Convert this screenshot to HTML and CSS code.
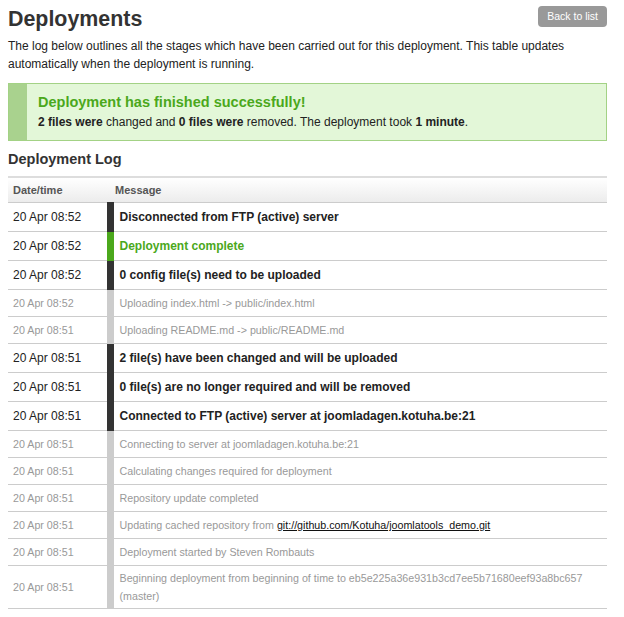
FILE: index.html
```html
<!DOCTYPE html>
<html>
<head>
<meta charset="utf-8">
<link rel="stylesheet" href="styles.css">
</head>
<body>
<div class="page">
  <div class="page-head">
    <h1 class="title">Deployments</h1>
    <a class="btn" href="#">Back to list</a>
  </div>
  <p class="intro">The log below outlines all the stages which have been carried out for this deployment. This table updates automatically when the deployment is running.</p>

  <div class="success">
    <div class="success-stripe"></div>
    <div class="success-body">
      <h2 class="success-title">Deployment has finished successfully!</h2>
      <p class="success-text"><b>2 files were</b> changed and <b>0 files were</b> removed. The deployment took <b>1 minute</b>.</p>
    </div>
  </div>

  <h3 class="log-title">Deployment Log</h3>
  <table class="log">
    <thead>
      <tr><th class="c-date">Date/time</th><th class="c-msg">Message</th></tr>
    </thead>
    <tbody>
      <tr class="strong"><td class="c-date">20 Apr 08:52</td><td class="c-msg dark">Disconnected from FTP (active) server</td></tr>
      <tr class="strong ok"><td class="c-date">20 Apr 08:52</td><td class="c-msg green">Deployment complete</td></tr>
      <tr class="strong"><td class="c-date">20 Apr 08:52</td><td class="c-msg dark">0 config file(s) need to be uploaded</td></tr>
      <tr class="light"><td class="c-date">20 Apr 08:52</td><td class="c-msg grey">Uploading index.html -&gt; public/index.html</td></tr>
      <tr class="light"><td class="c-date">20 Apr 08:51</td><td class="c-msg grey">Uploading README.md -&gt; public/README.md</td></tr>
      <tr class="strong"><td class="c-date">20 Apr 08:51</td><td class="c-msg dark">2 file(s) have been changed and will be uploaded</td></tr>
      <tr class="strong"><td class="c-date">20 Apr 08:51</td><td class="c-msg dark">0 file(s) are no longer required and will be removed</td></tr>
      <tr class="strong"><td class="c-date">20 Apr 08:51</td><td class="c-msg dark">Connected to FTP (active) server at joomladagen.kotuha.be:21</td></tr>
      <tr class="light"><td class="c-date">20 Apr 08:51</td><td class="c-msg grey">Connecting to server at joomladagen.kotuha.be:21</td></tr>
      <tr class="light"><td class="c-date">20 Apr 08:51</td><td class="c-msg grey">Calculating changes required for deployment</td></tr>
      <tr class="light"><td class="c-date">20 Apr 08:51</td><td class="c-msg grey">Repository update completed</td></tr>
      <tr class="light"><td class="c-date">20 Apr 08:51</td><td class="c-msg grey">Updating cached repository from <a href="#">git://github.com/Kotuha/joomlatools_demo.git</a></td></tr>
      <tr class="light"><td class="c-date">20 Apr 08:51</td><td class="c-msg grey">Deployment started by Steven Rombauts</td></tr>
      <tr class="light multi"><td class="c-date">20 Apr 08:51</td><td class="c-msg grey">Beginning deployment from beginning of time to eb5e225a36e931b3cd7ee5b71680eef93a8bc657 (master)</td></tr>
    </tbody>
  </table>
</div>
</body>
</html>
```

FILE: styles.css
```css
html, body {
  margin: 0;
  padding: 0;
  background: #fff;
}
body {
  font-family: "Liberation Sans", Arial, sans-serif;
  color: #333;
}
.page {
  width: 599px;
  padding: 6px 8px 8px 8px;
}
.page-head {
  display: flex;
  justify-content: space-between;
  align-items: flex-start;
  height: 29px;
}
.title {
  margin: 0;
  font-size: 21.4px;
  line-height: 26px;
  font-weight: bold;
  color: #333;
}
.btn {
  display: inline-block;
  background: #999;
  color: #fff;
  text-decoration: none;
  font-size: 10.5px;
  line-height: 21px;
  height: 21px;
  padding: 0 9px;
  border-radius: 4px;
}
.intro {
  margin: 2px 0 0 0;
  font-size: 12px;
  line-height: 18px;
  color: #222;
}
.success {
  display: flex;
  margin-top: 10px;
  height: 58px;
  box-sizing: border-box;
  border: 1px solid #a3d285;
  background: #e3f7d8;
}
.success-stripe {
  width: 18px;
  background: #a9d28e;
}
.success-body {
  padding: 8px 11px;
}
.success-title {
  margin: 0;
  font-size: 14.5px;
  line-height: 20px;
  font-weight: bold;
  color: #4ba81c;
}
.success-text {
  margin: 1px 0 0 0;
  font-size: 12px;
  line-height: 18px;
  color: #222;
}
.log-title {
  margin: 8px 0 0 0;
  font-size: 14.5px;
  line-height: 20px;
  font-weight: bold;
  color: #333;
}
.log {
  margin-top: 7px;
  width: 100%;
  border-collapse: collapse;
}
.log th {
  text-align: left;
  font-size: 11px;
  font-weight: bold;
  color: #555;
  height: 24px;
  padding: 0 5px;
  border-top: 2px solid #ddd;
  border-bottom: 1px solid #ccc;
  background: linear-gradient(#fff, #ececec);
}
.log th.c-msg {
  padding-left: 5px;
}
.log td {
  border-bottom: 1px solid #ccc;
  vertical-align: middle;
}
.c-date {
  width: 92px;
  padding-left: 5px;
}
.log td.c-msg {
  padding-left: 6px;
  border-left: 7px solid #333;
}
.strong td {
  height: 28px;
  padding-top: 0;
  padding-bottom: 0;
  font-size: 12px;
  line-height: 18px;
  color: #222;
}
.strong td.c-msg {
  font-weight: bold;
}
.log td.green {
  color: #4ba81c;
  border-left-color: #4ba81c;
}
.light td {
  height: 26px;
  padding-top: 0;
  padding-bottom: 0;
  font-size: 10.7px;
  line-height: 18px;
  color: #999;
}
.log td.grey {
  border-left-color: #ccc;
}
.light.multi td {
  height: 42px;
}
.log a {
  color: #111;
  text-decoration: underline;
}
```
